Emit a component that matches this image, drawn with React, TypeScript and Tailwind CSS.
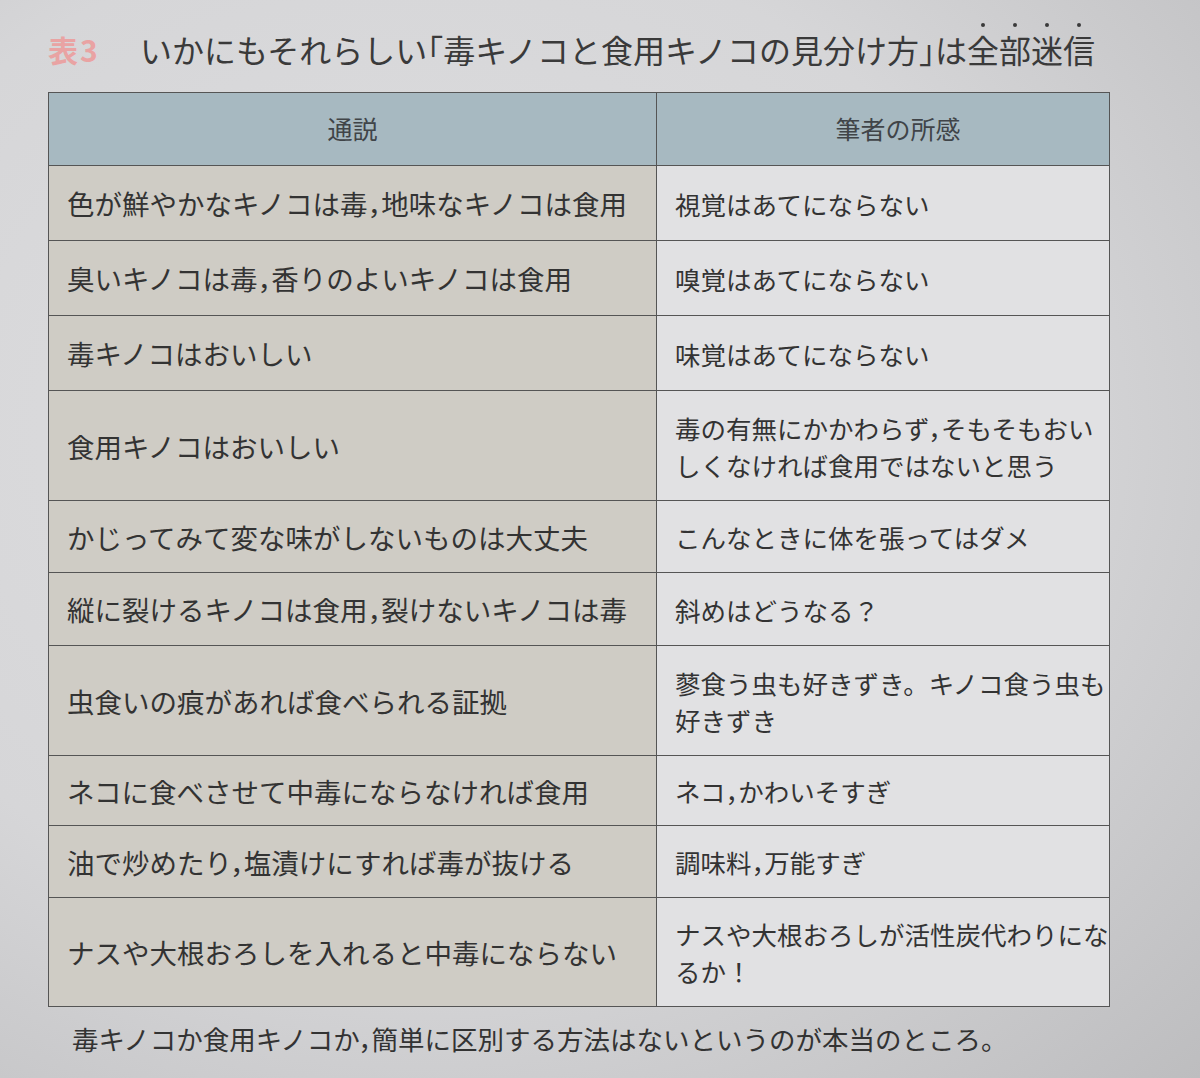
import React from "react";

const rows: { a: string; b: React.ReactNode; h: string; full?: boolean }[] = [
  { a: "色が鮮やかなキノコは毒，地味なキノコは食用", b: "視覚はあてにならない", h: "h-[75px]" },
  { a: "臭いキノコは毒，香りのよいキノコは食用", b: "嗅覚はあてにならない", h: "h-[75px]" },
  { a: "毒キノコはおいしい", b: "味覚はあてにならない", h: "h-[75px]" },
  { a: "食用キノコはおいしい", b: <>毒の有無にかかわらず，そもそもおい<br />しくなければ食用ではないと思う</>, h: "h-[110px]" },
  { a: "かじってみて変な味がしないものは大丈夫", b: "こんなときに体を張ってはダメ", h: "h-[72px]" },
  { a: "縦に裂けるキノコは食用，裂けないキノコは毒", b: "斜めはどうなる？", h: "h-[73px]", full: true },
  { a: "虫食いの痕があれば食べられる証拠", b: <>蓼食う虫も好きずき。キノコ食う虫も<br />好きずき</>, h: "h-[110px]", full: true },
  { a: "ネコに食べさせて中毒にならなければ食用", b: "ネコ，かわいそすぎ", h: "h-[70px]" },
  { a: "油で炒めたり，塩漬けにすれば毒が抜ける", b: "調味料，万能すぎ", h: "h-[72px]" },
  { a: "ナスや大根おろしを入れると中毒にならない", b: <>ナスや大根おろしが活性炭代わりにな<br />るか！</>, h: "h-[108px]", full: true },
];

function Dotted({ text }: { text: string }) {
  return (
    <>
      {text.split("").map((ch, i) => (
        <span key={i} className="relative inline-block">
          {ch}
          <span className="absolute left-1/2 top-[-2px] -translate-x-1/2 w-[4px] h-[4px] rounded-full bg-[#3a3a3a]" />
        </span>
      ))}
    </>
  );
}

export default function App() {
  return (
    <div
      className="w-[1200px] h-[1078px] overflow-hidden bg-[radial-gradient(ellipse_at_35%_40%,#dedee0_0%,#d6d6d8_55%,#bdbdbf_100%)] text-[#333] pt-[24px] [font-feature-settings:'halt']"
      style={{ fontFamily: '"Noto Sans CJK JP", "Noto Sans", sans-serif' }}
    >
      <div className="flex items-center pl-[48px] h-[50px]">
        <span className="text-[30px] font-bold text-[#e9a3a3] w-[92px] tracking-[2px]">表3</span>
        <span className="text-[32px] text-[#3a3a3a] whitespace-nowrap">
          いかにもそれらしい「毒キノコと食用キノコの見分け方」は<Dotted text="全部迷信" />
        </span>
      </div>

      <div className="ml-[48px] mt-[18px] w-[1062px] border-[1.5px] border-[#555]">
        <div className="flex h-[73px] bg-[#a7b9c1] border-b-[1.5px] border-[#555]">
          <div className="w-[608px] shrink-0 flex items-center justify-center text-[25px] text-[#404448] border-r-[1.5px] border-[#555]">通説</div>
          <div className="flex-1 min-w-0 flex items-center justify-center pl-[30px] text-[25px] text-[#404448]">筆者の所感</div>
        </div>
        {rows.map((r, i) => (
          <div
            key={i}
            className={`flex ${r.h} ${i < rows.length - 1 ? "border-b-[1.5px] border-[#555]" : ""}`}
          >
            <div className="w-[608px] shrink-0 flex items-center pl-[18px] pr-1 bg-[#cfccc5] border-r-[1.5px] border-[#555] text-[27.5px] leading-[34px] whitespace-nowrap">
              <span>{r.a}</span>
            </div>
            <div className="flex-1 min-w-0 flex items-center pl-[18px] bg-[#e1e1e3] text-[25.5px] leading-[37px] whitespace-nowrap">
              <span className={r.full ? "[font-feature-settings:normal]" : ""}>{r.b}</span>
            </div>
          </div>
        ))}
      </div>

      <div className="pl-[72px] mt-[12px] text-[26.5px] text-[#333] whitespace-nowrap">
        毒キノコか食用キノコか，簡単に区別する方法はないというのが本当のところ。
      </div>
    </div>
  );
}
